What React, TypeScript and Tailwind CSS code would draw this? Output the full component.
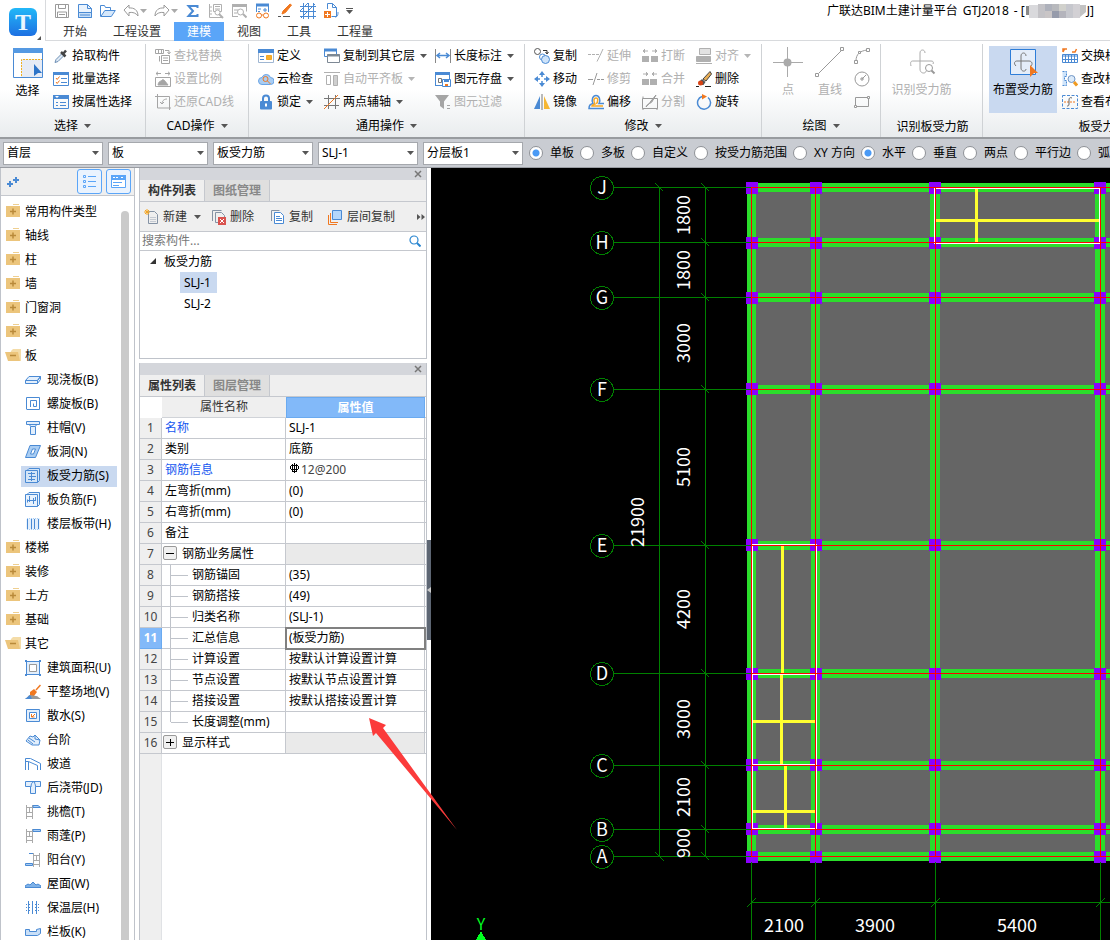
import { useState } from 'react';
import type { ReactNode } from 'react';

const BLUE = '#4a8ad4';
const GREY = '#b0b0b0';
const ORANGE = '#f07820';

const icons: Record<string, ReactNode> = {
  // quick access
  save: <g stroke="#9a9a9a"><path d="M1.500 1.500h13v13h-13zM4.500 1.500v4h7v-4M3.500 14v-5h9v5M5 11.500h6" /></g>,
  newDoc: <g stroke={BLUE}><path d="M1.500 1.500h9l4 4v9h-13z" fill="#eaf3fd" /><path d="M10.500 1.500v4h4" /><path d="M1.500 9.500h13v5h-13z" fill="#c9dff7" /><path d="M3 12h10" /></g>,
  open: <g stroke={BLUE}><path d="M.5 13.500v-11h4l1 2h5v3" /><path d="M.8 13.500l4-6h10.500l-4 6z" fill="#d6e8fb" /></g>,
  undo: <path d="M1 7l5-5v3c5-.5 9 2 9 8-2-3-5-4-9-3.500V13z" stroke="#9a9a9a" />,
  redo: <path d="M15 7l-5-5v3c-5-.5-9 2-9 8 2-3 5-4 9-3.500V13z" stroke="#9a9a9a" />,
  sigma: <path d="M12.500 5V3h-9L8 8l-4.500 5h9v-2" stroke={BLUE} strokeWidth="2" />,
  measure: <g stroke={GREY}><path d="M1.500 1v13.500h13M2 4h2M2 8h2M2 11h2M5.500 1.500h8v7h-8zM7 3.500h5M7 6h5" /><circle cx="9.500" cy="9.500" r="2.500" fill="#fff" /><path d="M11 11l4 4" strokeWidth="2" /></g>,
  find: <g stroke={GREY}><path d="M1.500 13V2.500h14v6M3 7h4M3 10h3M1 13.500h6" /><path d="M1 2.500h15" strokeWidth="3" /><circle cx="9.500" cy="9" r="3" /><path d="M12 11l3.500 3.500" strokeWidth="2" /></g>,
  glasses: <g><path d="M2.500 9V2.500h12V9" stroke={BLUE} /><path d="M2 2h13" stroke={BLUE} strokeWidth="3" /><path d="M4 6h3M4 8.500h2M9 7h4M11 5v4" stroke={BLUE} /><circle cx="5" cy="12.500" r="2.500" stroke={ORANGE} /><circle cx="12" cy="12.500" r="2.500" stroke={ORANGE} /><path d="M7 12h2.500" stroke={ORANGE} /></g>,
  brush: <g><path d="M13 1l1.500 1L8.500 9.500 5 11l1-3z" stroke={ORANGE} fill={ORANGE} /><path d="M1 13.500h3M6 13.500h7" stroke="#555" /></g>,
  grid: <path d="M3.500 0v16M8.500 0v16M13.500 0v16M0 3.500h16M0 8.500h16M0 13.500h16M1 15L15 1M0 8l8-8" stroke={BLUE} />,
  addDoc: <g><path d="M4.500 6V.5h5l4 4v9h-5" stroke={BLUE} /><path d="M9.500 .5v4h4M12 14c3 0 3-3 3-5" stroke={BLUE} /><path d="M1 8h7v7H1z" fill={ORANGE} /><path d="M4.500 9v5M2 11.500h5" stroke="#fff" /></g>,
  // ribbon
  pipette: <g><path d="M2 14.500l1-3L9 5.500l2 2-6 6z" stroke="#6d8fb5" fill="#dfeaf5" /><path d="M8 4l4.500 4.500M10 6l3-3.500" stroke="#444" strokeWidth="2.500" /></g>,
  checklist: <g><path d="M.5 2.500h15v12H.5z" stroke={BLUE} /><path d="M0 2.500h16" stroke={BLUE} strokeWidth="3" /><path d="M3 7l1.200 1.500L6.500 5.500M3 11l1.200 1.500 2.300-3" stroke={ORANGE} /><path d="M8 7.500h6M8 11.500h6" stroke={BLUE} /></g>,
  attrList: <g><path d="M.5 2.500h15v12H.5z" stroke={BLUE} /><path d="M0 3h16" stroke={BLUE} strokeWidth="4" /><path d="M2 2l2 2 2-2z" fill="#fff" /><path d="M3 8.500h2M3 11.500h2M7 8.500h6M7 11.500h6" stroke={BLUE} /></g>,
  replace: <g stroke="#a5a5a5"><path d="M.5 1.500h8v4h-8zM3.500 1.500v4M6.500 1.500v4M10 2.500h4v3M12.500 4l1.500 2 1.500-2M4.500 8v5.500M6.500 7.500h8v8h-8zM8 10h5M8 12.500h5" /></g>,
  scale: <g stroke="#a5a5a5"><path d="M1 2.500h5M10 2.500h5M3 .8L1 2.500l2 1.800M13 .8l2 1.700-2 1.800M.5 6.500h15v9H.5z" /><path d="M3 14c1-5 3-3 4-5 2-1 3 1 6 5z" fill="#a5a5a5" /></g>,
  restore: <g stroke="#a5a5a5"><path d="M2.500 0v14H16M0 2.500h14.500V16M5 8l2 2 2-2M7 10c0-4 3-5 5-5" /></g>,
  define: <g><path d="M.5 1.500h15v13H.5z" stroke="#9fb6d2" fill="#fff" /><path d="M0 3h16" stroke={BLUE} strokeWidth="4" /><path d="M2 8.500h4M2 11.500h4" stroke={BLUE} /><path d="M8.500 7.500h5v4h-5z" fill="#f5b030" stroke="#f5a623" /></g>,
  cloud: <g><path d="M4 13.500a3.500 3.500 0 010-7 4.500 4.500 0 018.500 0 3.500 3.500 0 010 7z" fill="#a9cdf3" stroke="#6ba4e4" /><circle cx="7.500" cy="8" r="2.500" stroke={ORANGE} /><path d="M9.500 10l3 3" stroke={ORANGE} /></g>,
  lock: <g><path d="M5 8V4.500a3 3 0 016 0V8" stroke={BLUE} strokeWidth="2" /><rect x="2" y="7" width="12" height="8.500" rx="1" fill={BLUE} /><path d="M8 9.500v3" stroke="#fff" strokeWidth="2" /></g>,
  copyLayer: <g><path d="M.5 1.500h12v7H.5z" stroke={BLUE} /><path d="M0 2h13" stroke={BLUE} strokeWidth="3" /><path d="M3.500 6.500h12v8h-12z" fill="#fff" stroke="#7d8894" /><path d="M3 7.500h13" stroke="#7d8894" strokeWidth="2" /></g>,
  align: <g stroke={GREY}><path d="M0 1.500h16M2.500 4.500h4v9h-4z" /><path d="M9.500 4.500h4v10h-4z" fill="#cfcfcf" /></g>,
  axis: <g><path d="M4.500 1v14M11.500 1v14M0 4.500h16M0 11.500h15" stroke="#777" /><path d="M0 15L14 1" stroke={ORANGE} /></g>,
  dimension: <g><path d="M.5 1v14M15.500 1v14" stroke="#888" /><path d="M2 7.500h12M5 5L2 7.500 5 10M11 5l3 2.500-3 2.500" stroke={BLUE} strokeWidth="1.500" /></g>,
  store: <g><path d="M.5 14.500v-13h14V8M0 14.500h7" stroke={BLUE} /><path d="M0 2.500h15" stroke={BLUE} strokeWidth="3" /><path d="M3.500 7.500h3v4h-3z" stroke="#777" /><path d="M7.500 8.500h8v7h-8z" fill="#fff" stroke={BLUE} /><path d="M9 8h5v3H9z" fill={BLUE} /><path d="M10 13h3v2h-3z" fill={ORANGE} /></g>,
  filter: <g><path d="M0 1h14L9 7.500V15l-4-3V7.500z" fill="#a5a5a5" /><path d="M12 11.500h3M12 14.500h3" stroke="#a5a5a5" /></g>,
  copy: <g><circle cx="3.500" cy="3.500" r="3" stroke="#555" /><path d="M9 2.500h4v3M11.500 4l1.500 2 1.500-2" stroke="#333" /><circle cx="8.500" cy="9" r="3" stroke={BLUE} /><circle cx="11.500" cy="11.500" r="4" stroke={BLUE} fill="#cfe4fa" /></g>,
  move: <g fill={BLUE}><path d="M8 0l3 4H5zM8 16l3-4H5zM0 8l4-3v6zM16 8l-4-3v6z" /><path d="M8 3v3M8 10v3M3 8h3M10 8h3" stroke={BLUE} strokeWidth="1.500" /></g>,
  mirror: <g><path d="M6 2v13H0z" fill={BLUE} /><path d="M10 2v13h6z" fill="#f7b733" /><path d="M8 0v16" stroke="#777" /></g>,
  extend: <path d="M0 6.500h3M4 6.500h3M8 6.500h3M15 1l-3 6.500-3 6" stroke={GREY} />,
  trim: <path d="M0 8.500h5M9 8.500h3M13 8.500h3M9 2L5 14" stroke="#999" />,
  offset: <g strokeWidth="1.500"><path d="M16 14.500H1c0-3 1-4.500 4-5-2-4 0-8 3-8s5 4 3 8h5" stroke={BLUE} /><path d="M15 12H4c0-1 1-1.500 3-2-2-4-1-6 1-6s2.500 2 .5 6" stroke="#f7a823" /></g>,
  breakIt: <g fill={GREY}><path d="M0 8h7v6H0zM9 8h7v6H9z" /><path d="M1 3h5M3 1L1 3l2 2M10 3h5M13 1l2 2-2 2" stroke={GREY} /></g>,
  merge: <g fill={GREY}><path d="M0 8h7v6H0zM8 8h7v6H8z" /><path d="M1 3h5M4 1l2 2-2 2M10 3h5M12 1l-2 2 2 2" stroke={GREY} /></g>,
  split: <g stroke="#999"><path d="M.5 4.500h15v10H.5zM1 4.500v-2M1 16v-2M15 16v-2" /><path d="M4 13c1-4 6-3 7-7l3-5-5 6c-2 3-3 4-5 6z" fill="#bbb" /></g>,
  alignBox: <g><path d="M3.500 .5h11v6h-11z" stroke={GREY} fill="#e2e2e2" /><path d="M.5 8.500h14v5H.5z" fill={GREY} stroke={GREY} /><path d="M0 15.500h16" stroke={GREY} /></g>,
  erase: <g><path d="M7 8l7-7.500L15.500 3 10 10z" fill="#e8ad55" stroke="#444" /><path d="M6 8l3.500 3-2 3H3V11z" fill="#555" /><circle cx="4.500" cy="12" r="2.500" fill="#d84315" /><path d="M0 15.500h3M9 15.500h6" stroke="#222" /></g>,
  rotate: <g><path d="M12 3.500a6.500 6.500 0 11-6-1" stroke={BLUE} strokeWidth="1.500" /><path d="M6 0l5 2.500L6 5.500z" fill={ORANGE} /></g>,
  swap: <g><path d="M1 4l1.500-3M1 4V1h4M14.500 1L13 4h-3" stroke={ORANGE} strokeWidth="1.500" /><path d="M.5 6.500h15v8H.5zM0 8h16M3.500 7v8M6.500 7v8M9.500 7v8M12.500 7v8M0 11.500h16" stroke={BLUE} /></g>,
  modify: <g><path d="M.5 .5h4v5h-2v4h2v5h-4" stroke={BLUE} strokeDasharray="2 1" fill="#cfe4fa" /><circle cx="9.500" cy="8" r="3.500" stroke="#6f94c4" fill="#dcebfa" /><path d="M12 11l3 3.500" stroke="#f09a20" strokeWidth="3" /></g>,
  view: <g><path d="M.5 1.500h15v13H.5z" stroke={BLUE} strokeDasharray="3 1.500" /><path d="M2 8h12" stroke={ORANGE} strokeDasharray="2 1" /><path d="M10 4c-2-1-3 0-3 2v4c0 2-1 2-2 2" stroke="#666" /></g>,
  arc: <g stroke="#999"><path d="M2 13C2 6 6 3 13 2" /><path d="M.5 12.500h3v3h-3zM4.500 3.500h2v2h-2zM12.500 .5h3v3h-3z" fill="#fff" /></g>,
  circle: <g stroke="#999"><circle cx="8" cy="8" r="7" /><path d="M8 8l4-4M7 7h2v2H7z" /></g>,
  rect: <g stroke="#999"><path d="M1.500 3.500h13v9h-13z" /><path d="M.5 11.500h2v2h-2zM13.500 2.500h2v2h-2z" fill="#fff" /></g>,
  // component toolbar
  newItem: <g><path d="M4.500 2.500h6l3 3v9h-9z" stroke="#8593a5" /><path d="M6 8.500h6M6 10.500h6M6 12.500h6" stroke="#c5cad2" /><path d="M0 3h6M3 0v6M1 1l4 4M5 1L1 5" stroke="#f5a623" /></g>,
  delItem: <g><path d="M1.500 12V1.500h9M4.500 13.500v-10h6l3 3V8M4.500 13.500H7" stroke="#8593a5" /><path d="M7 8h8v8H7z" fill="#d9534f" /><path d="M9 10l4 4M13 10l-4 4" stroke="#fff" /></g>,
  copyItem: <g><path d="M1.500 12V1.500h8" stroke="#8593a5" /><path d="M4.500 3.500h6l3 3v8h-9z" stroke={BLUE} fill="#fff" /><path d="M6 7.500h4M6 9.500h6M6 11.500h6" stroke={BLUE} /></g>,
  layerItem: <g><path d="M1.500 6v9.500H10M3.500 4v9.500H11" stroke={ORANGE} /><path d="M5.500 1.500h9v9h-9z" fill="#b3d6fb" stroke={BLUE} /></g>,
  // navigation tree
  folder: <g><path d="M8 0h6v1H8z" fill="#efcf90" /><path d="M1 2h14v11H1z" fill="#ecc57c" /><path d="M5 7.500h6M8 4.500v6" stroke="#b98a3a" strokeWidth="1.500" /></g>,
  folderOpen: <g><path d="M6 3l2-2h8v12H3z" fill="#f4dca8" /><path d="M0 4h13l2 9H3z" fill="#ecc57c" /><path d="M5 7.500h6" stroke="#b98a3a" strokeWidth="1.500" /></g>,
  slab: <path d="M4 4.500h11.500l-3 4v3H.5v-3zM.5 8.500h12l3-4v3l-3 4" stroke={BLUE} fill="#e3effc" />,
  spiral: <path d="M2 13.500h12.500v-12h-13v12M5.500 11V4.500h6v6h-3v-3" stroke={BLUE} />,
  cap: <path d="M1.500 1.500h13v3h-3l-1 2v8h-5v-8l-1-2h-3zM4 4.500h8M6 6.500h4" stroke={BLUE} fill="#e3effc" />,
  hole: <g stroke={BLUE}><path d="M5 1.500h10.500l-5 12H.5z" fill="#a9cdf3" /><path d="M7.500 5h3l-2 5h-3z" fill="#fff" /></g>,
  rebar: <g stroke={BLUE}><path d="M.5 2.500h12v12H.5zM2 2.500l2-2h10.500v12l-2 2" fill="#d3e5f8" /><path d="M3 5.500h7M3 11.500h7M6.500 4v9M4 8.500h7" /></g>,
  negRebar: <g stroke={BLUE}><path d="M.5 2.500h12v12H.5zM2 2.500l2-2h10.500v12l-2 2" fill="#e8f2fd" /><path d="M4.500 4v6M8.500 6v6M3 8.500h7M2.500 7.500v3M10.500 5v4" /></g>,
  band: <g stroke={BLUE}><path d="M2 2.500h12v11H2z" fill="#e3effc" stroke="#a9cdf3" strokeDasharray="1 1" /><path d="M2.500 3v10M6.500 3v10M9.500 3v10M13.500 3v10" /></g>,
  area: <g><path d="M1.500 1.500h13v13h-13z" stroke={BLUE} fill="#e3effc" /><path d="M4.500 4.500h7v7h-7z" stroke="#999" fill="#fff" /><path d="M0 0h2v2H0zM14 0h2v2h-2zM0 14h2v2H0zM14 14h2v2h-2z" fill={BLUE} /></g>,
  ground: <g><path d="M15.500 1L11 6" stroke={ORANGE} strokeWidth="1.500" /><path d="M5 8l4-3 3 3-3 4H5z" fill={ORANGE} /><path d="M0 15c3-1 3-4 5-4s4 1 6 1 3 2 5 3z" fill="#999" /><path d="M0 15h7l-2-4z" fill={BLUE} /></g>,
  apron: <g><path d="M1.500 1.500h13v12h-13z" stroke={BLUE} fill="#e3effc" /><path d="M4.500 4.500h7v6h-7z" stroke={BLUE} fill="#fff" /><path d="M10 6l-3 3M6.500 6v3h3" stroke={ORANGE} /></g>,
  steps: <g stroke={BLUE}><path d="M1 9l4-5 3 1 2-2 5 5-1 5H7z" fill="#e3effc" /><path d="M4 6l6 4M3 8l5 4M10 3v4l5 1" /></g>,
  ramp: <path d="M.5 14V2.500h5l10 5V14M3.500 14V5.500l9 4V14M.5 5.500h3" stroke={BLUE} />,
  pour: <g stroke={BLUE}><path d="M.5 1.500h15v5h-5v7h-5v-7h-5z" fill="#e3effc" /><path d="M6 7c0-3 1-5 3-5.500M10.500 6.500c0-3-1-2-1-5" /></g>,
  eave: <g><path d="M1.500 1v14M7.500 1v14M4.500 3v5M1 3.500h6M1 8.500h6M1 12.500h6" stroke="#aaa" /><path d="M8 1.500h5l2.500 2H8z" fill="#a9cdf3" stroke={BLUE} /></g>,
  canopy: <g><path d="M1.500 1v14M7.500 1v14M4.500 3v5M1 3.500h6M1 8.500h6M1 12.500h6" stroke="#aaa" /><path d="M8 1.500h7.500v2H8z" fill="#a9cdf3" stroke={BLUE} /></g>,
  balcony: <g><path d="M8.500 1v14M14.500 1v14M11.500 3v5M8 3.500h6M8 8.500h6M8 12.500h6" stroke="#aaa" /><path d="M.5 11.500h7v2h-7zM4 1.500h4" fill="#a9cdf3" stroke={BLUE} /></g>,
  roof: <path d="M0 10l3-2 2 1 3-3 3 3 2-1 3 2v1.500H0z" fill="#7fb2e8" stroke={BLUE} />,
  insulate: <g stroke={BLUE}><path d="M3.500 1v13M7.500 1v13M11.500 1v13" /><path d="M1 4.500h14M1 7.500h14M1 10.500h14" strokeDasharray="1 2" /></g>,
  rail: <path d="M.5 5.500h4v2h7v-2l4-1v5l-3 2h-12z" stroke={BLUE} fill="#c9dff7" />,
};

function Icon({ name }: { name: string }) {
  return (
    <svg viewBox="0 0 16 16" fill="none" aria-hidden="true" className="size-4 shrink-0">
      {icons[name]}
    </svg>
  );
}

function Caret({ className = 'text-[#555]' }: { className?: string }) {
  return (
    <svg viewBox="0 0 7 4" aria-hidden="true" className={`h-1 w-[7px] shrink-0 ${className}`}>
      <path d="M0 0h7L3.500 4z" fill="currentColor" />
    </svg>
  );
}

type Tool = { icon: string; label: string; off?: boolean; menu?: boolean };

function ToolColumn({ tools, className = '' }: { tools: Tool[]; className?: string }) {
  return (
    <div className={`flex shrink-0 flex-col ${className}`}>
      {tools.map((t) => (
        <button
          key={t.label}
          disabled={t.off}
          className="flex h-[23px] items-center gap-[3px] whitespace-nowrap text-black disabled:text-[#b0b0b0]"
        >
          <Icon name={t.icon} />
          {t.label}
          {t.menu && <span className="ml-[2px] flex"><Caret className={t.off ? 'text-[#b5b5b5]' : 'text-[#555]'} /></span>}
        </button>
      ))}
    </div>
  );
}

function Group({ label, menu, className, children }: { label: string; menu?: boolean; className: string; children: ReactNode }) {
  return (
    <section className={`flex shrink-0 flex-col justify-between border-r border-[#cfd2d5] ${className}`}>
      <div className="flex">{children}</div>
      <div className={`flex items-center justify-center gap-[6px] whitespace-nowrap text-black ${menu ? 'h-[22px]' : 'h-5'}`}>
        {label}
        {menu && <Caret />}
      </div>
    </section>
  );
}

const quickTools: [string, string][] = [
  ['save', '保存'], ['newDoc', '新建'], ['open', '打开'], ['undo', '撤销'], ['redo', '恢复'], ['sigma', '汇总计算'], ['measure', '查看工程量'],
  ['find', '查找'], ['glasses', '查看'], ['brush', '格式刷'], ['grid', '轴网'], ['addDoc', '导入'],
];

const tabs = ['开始', '工程设置', '建模', '视图', '工具', '工程量'];

function Header() {
  return (
    <header className="flex bg-white">
      <div className="flex w-[46px] shrink-0 items-start border-r border-[#d8dadd] pt-2 pl-[9px]">
        <svg viewBox="0 0 32 32" className="h-8 w-8" aria-label="GTJ2018">
          <defs>
            <linearGradient id="logo" x1="0" y1="0" x2="0" y2="1">
              <stop offset="0" stopColor="#22b8f8" />
              <stop offset="1" stopColor="#1d70e2" />
            </linearGradient>
          </defs>
          <rect x="0" y="0" width="28" height="28" rx="6" fill="url(#logo)" />
          <text x="14" y="22" textAnchor="middle" fontSize="24" fontWeight="bold" fontFamily="Liberation Serif, serif" fill="#e9f6ff">T</text>
          <path d="M32 28v4h-4z" fill="#555" />
        </svg>
      </div>
      <div className="min-w-0 flex-1">
        <div className="flex h-[22px] items-center">
          <div className="flex items-center gap-[7px] pl-2">
            {quickTools.map(([icon, label]) => (
              <div key={icon} className={icon === 'undo' || icon === 'redo' ? 'flex w-6 items-center gap-px' : 'flex items-center'}>
                <button aria-label={label}><Icon name={icon} /></button>
                {(icon === 'undo' || icon === 'redo') && <Caret className="text-[#aaa]" />}
              </div>
            ))}
            <button aria-label="自定义快速访问工具栏" className="flex flex-col items-center gap-px">
              <span className="h-px w-[7px] bg-[#555]" />
              <Caret />
            </button>
          </div>
          <div className="mr-4 ml-auto flex items-center whitespace-nowrap text-black">
            <span className="mr-[5px]">广联达BIM土建计量平台</span>
            <span className="mr-[5px]">GTJ2018</span>
            <span>- [</span>
            <svg viewBox="0 0 62 14" className="h-[14px] w-[62px]" aria-hidden="true">
              <path d="M1 2h3v9H1z" fill="#888" />
              <path d="M4 1h9v13H4z" fill="#d9d9dc" />
              <path d="M13 0h7v14h-7z" fill="#c3c2c6" />
              <path d="M20 0h7v7h-7z" fill="#aeb1bb" />
              <path d="M20 7h7v7h-7z" fill="#c9c5c6" />
              <path d="M27 0h7v7h-7z" fill="#b8b9bd" />
              <path d="M27 7h7v7h-7z" fill="#969bab" />
              <path d="M34 0h7v7h-7z" fill="#d1d1cc" />
              <path d="M34 7h7v7h-7z" fill="#b4b4bc" />
              <path d="M41 0h7v14h-7z" fill="#c6c7cd" />
              <path d="M48 0h7v14h-7z" fill="#d2d0d4" />
              <path d="M55 1h6v7l-6 5z" fill="#c3c3c3" />
            </svg>
            <span>J]</span>
          </div>
        </div>
        <nav className="flex h-[19px] border-b border-[#d8dadd] pl-1">
          {tabs.map((t) => (
            <button
              key={t}
              className={t === '建模' ? 'h-[19px] bg-[#5aa5f8] px-[13px] text-white' : 'h-[19px] px-[13px] text-[#333]'}
            >
              {t}
            </button>
          ))}
        </nav>
      </div>
    </header>
  );
}

function Ribbon() {
  return (
    <div className="flex h-[98px] overflow-hidden border-b-2 border-[#989b9f] bg-gradient-to-b from-white via-white to-[#e9ecee] pt-[3px]">
      <Group label="选择" menu className="w-[146px]">
        <button className="flex w-[55px] flex-col items-center gap-1 pt-1 text-black">
          <svg viewBox="0 0 30 30" className="size-[30px]" fill="none" aria-hidden="true">
            <path d="M.5 .5h29v29H.5z" fill="#fff" stroke={BLUE} />
            <path d="M0 0h30v5H0z" fill="#5599e2" />
            <path d="M8 11h21v18H8z" fill="#e6ebf5" />
            <path d="M8.500 28V11.500H29" stroke="#f0b020" strokeDasharray="2 1" />
            <path d="M21 16v12l4-3h4z" fill="#2d74c8" />
          </svg>
          选择
        </button>
        <ToolColumn
          className="-ml-[2px]"
          tools={[
            { icon: 'pipette', label: '拾取构件' },
            { icon: 'checklist', label: '批量选择' },
            { icon: 'attrList', label: '按属性选择' },
          ]}
        />
      </Group>
      <Group label="CAD操作" menu className="w-[103px]">
        <ToolColumn
          className="pl-[9px]"
          tools={[
            { icon: 'replace', label: '查找替换', off: true },
            { icon: 'scale', label: '设置比例', off: true },
            { icon: 'restore', label: '还原CAD线', off: true },
          ]}
        />
      </Group>
      <Group label="通用操作" menu className="w-[276px]">
        <ToolColumn
          className="w-[75px] pl-[9px]"
          tools={[
            { icon: 'define', label: '定义' },
            { icon: 'cloud', label: '云检查' },
            { icon: 'lock', label: '锁定', menu: true },
          ]}
        />
        <ToolColumn
          className="w-[111px]"
          tools={[
            { icon: 'copyLayer', label: '复制到其它层', menu: true },
            { icon: 'align', label: '自动平齐板', off: true, menu: true },
            { icon: 'axis', label: '两点辅轴', menu: true },
          ]}
        />
        <ToolColumn
          tools={[
            { icon: 'dimension', label: '长度标注', menu: true },
            { icon: 'store', label: '图元存盘', menu: true },
            { icon: 'filter', label: '图元过滤', off: true },
          ]}
        />
      </Group>
      <Group label="修改" menu className="w-[237px]">
        <ToolColumn
          className="w-[63px] pl-[9px]"
          tools={[
            { icon: 'copy', label: '复制' },
            { icon: 'move', label: '移动' },
            { icon: 'mirror', label: '镜像' },
          ]}
        />
        <ToolColumn
          className="w-[54px]"
          tools={[
            { icon: 'extend', label: '延伸', off: true },
            { icon: 'trim', label: '修剪', off: true },
            { icon: 'offset', label: '偏移' },
          ]}
        />
        <ToolColumn
          className="w-[54px]"
          tools={[
            { icon: 'breakIt', label: '打断', off: true },
            { icon: 'merge', label: '合并', off: true },
            { icon: 'split', label: '分割', off: true },
          ]}
        />
        <ToolColumn
          tools={[
            { icon: 'alignBox', label: '对齐', off: true, menu: true },
            { icon: 'erase', label: '删除' },
            { icon: 'rotate', label: '旋转' },
          ]}
        />
      </Group>
      <Group label="绘图" menu className="w-[119px]">
        <button disabled className="flex w-[52px] flex-col items-center gap-1 pt-[3px] text-[#b0b0b0]">
          <svg viewBox="0 0 30 30" className="size-[30px]" aria-hidden="true">
            <path d="M14.500 0v30M0 15.500h30" stroke="#aaa" />
            <circle cx="14.500" cy="15.500" r="4" fill="#aaa" />
          </svg>
          点
        </button>
        <button disabled className="flex w-8 flex-col items-center gap-1 pt-[3px] text-[#b0b0b0]">
          <svg viewBox="0 0 30 30" className="size-[30px]" fill="none" stroke="#999" aria-hidden="true">
            <path d="M4 26L26 4M.5 26.500h3v3h-3zM25.500 .5h3v3h-3z" />
          </svg>
          直线
        </button>
        <div className="flex flex-col pl-2">
          {[['arc', '圆弧'], ['circle', '圆'], ['rect', '矩形']].map(([icon, label]) => (
            <button key={icon} aria-label={label} className="flex h-[23px] items-center"><Icon name={icon} /></button>
          ))}
        </div>
      </Group>
      <Group label="识别板受力筋" className="w-[102px] pl-[2px]">
        <button disabled className="flex w-[77px] flex-col items-center gap-1 pt-[3px] text-[#b0b0b0]">
          <svg viewBox="0 0 30 30" className="size-[30px]" fill="none" stroke="#aaa" aria-hidden="true">
            <path d="M18 6c0-4-5-4-5 0v16c0 5 6 5 6 2M4 19c-1-4 0-5 2-5h18c2 0 3 1 2 3" />
            <circle cx="22" cy="21" r="3.500" fill="#fff" stroke="#999" />
            <path d="M24.500 23.500l3 3" stroke="#999" strokeWidth="2" />
          </svg>
          识别受力筋
        </button>
      </Group>
      <Group label="板受力筋二次编辑" className="w-[288px]">
        <button className="mt-[2px] ml-[6px] flex h-[67px] w-[68px] shrink-0 flex-col items-center gap-1 bg-[#c9d9f0] pt-[3px] text-black">
          <svg viewBox="0 0 30 28" className="h-[28px] w-[30px]" fill="none" aria-hidden="true">
            <path d="M2.500 .5h25v25h-25z" fill="#e4edf9" stroke="#2d7dd8" />
            <path d="M18 7c0-4-5-4-5 0v12c0 4 5 4 5 1M8 17c-3-3-1-5 1-5h12c3 0 4 3 2 5" stroke="#777" />
            <path d="M22 16l8 8h-4l-4 4z" fill={ORANGE} />
          </svg>
          布置受力筋
        </button>
        <ToolColumn
          className="pl-[5px]"
          tools={[
            { icon: 'swap', label: '交换标注' },
            { icon: 'modify', label: '查改标注' },
            { icon: 'view', label: '查看布筋' },
          ]}
        />
      </Group>
    </div>
  );
}

const filters: [string, string[]][] = [
  ['楼层', ['首层', '基础层', '第2层']],
  ['构件分类', ['板', '梁', '墙']],
  ['构件类型', ['板受力筋', '板负筋']],
  ['构件', ['SLJ-1', 'SLJ-2']],
  ['分层', ['分层板1', '分层板2']],
];

const ranges = ['单板', '多板', '自定义', '按受力筋范围'];
const directions = ['XY 方向', '水平', '垂直', '两点', '平行边', '弧线边布置放射筋'];

function Radios({ name, options, initial }: { name: string; options: string[]; initial: string }) {
  const [value, setValue] = useState(initial);
  return (
    <>
      {options.map((o) => (
        <label key={o} className="flex shrink-0 items-center gap-[7px] whitespace-nowrap">
          <input
            type="radio"
            name={name}
            checked={value === o}
            onChange={() => setValue(o)}
            className="size-[14px] appearance-none rounded-full border border-[#8e9196] bg-white checked:bg-[radial-gradient(circle,#4a9af5_0_3px,#fff_4px)]"
          />
          {o}
        </label>
      ))}
    </>
  );
}

function OptionBar() {
  return (
    <div className="flex h-[29px] items-center gap-[6px] overflow-hidden border-b border-[#999ca2] bg-[#c9ccd2] pl-[3px] text-black">
      <div className="flex shrink-0 gap-[5px]">
        {filters.map(([label, options]) => (
          <div key={label} className="relative flex">
            <select aria-label={label} className="h-[23px] w-[100px] appearance-none border border-[#a5a8ad] bg-white pl-[3px] text-black">
              {options.map((o) => <option key={o}>{o}</option>)}
            </select>
            <span className="pointer-events-none absolute inset-y-0 right-1 flex items-center"><Caret /></span>
          </div>
        ))}
      </div>
      <Radios name="range" options={ranges} initial="单板" />
      <Radios name="direction" options={directions} initial="水平" />
    </div>
  );
}

type Node = { label: string; icon?: string };

const navItems: Node[] = [
  { label: '常用构件类型' }, { label: '轴线' }, { label: '柱' }, { label: '墙' }, { label: '门窗洞' }, { label: '梁' }, { label: '板' },
  { label: '现浇板(B)', icon: 'slab' },
  { label: '螺旋板(B)', icon: 'spiral' },
  { label: '柱帽(V)', icon: 'cap' },
  { label: '板洞(N)', icon: 'hole' },
  { label: '板受力筋(S)', icon: 'rebar' },
  { label: '板负筋(F)', icon: 'negRebar' },
  { label: '楼层板带(H)', icon: 'band' },
  { label: '楼梯' }, { label: '装修' }, { label: '土方' }, { label: '基础' }, { label: '其它' },
  { label: '建筑面积(U)', icon: 'area' },
  { label: '平整场地(V)', icon: 'ground' },
  { label: '散水(S)', icon: 'apron' },
  { label: '台阶', icon: 'steps' },
  { label: '坡道', icon: 'ramp' },
  { label: '后浇带(JD)', icon: 'pour' },
  { label: '挑檐(T)', icon: 'eave' },
  { label: '雨蓬(P)', icon: 'canopy' },
  { label: '阳台(Y)', icon: 'balcony' },
  { label: '屋面(W)', icon: 'roof' },
  { label: '保温层(H)', icon: 'insulate' },
  { label: '栏板(K)', icon: 'rail' },
];

function Navigator() {
  return (
    <aside className="flex w-[135px] shrink-0 flex-col border-x border-[#bfc3ca] bg-white">
      <div className="flex h-7 items-center gap-1 border-b border-[#c5c8ce] bg-[#efefef] pr-[3px] pl-[5px]">
        <button aria-label="展开全部" className="mr-auto">
          <svg viewBox="0 0 14 12" className="h-3 w-[14px]" aria-hidden="true">
            <path d="M1 8h6M4 5v6M7 4h6M10 1v6" stroke={BLUE} strokeWidth="2" />
          </svg>
        </button>
        <button aria-label="列表" className="flex size-[25px] items-center justify-center rounded-[3px] border border-[#5aa5f8] bg-[#eaf3fe]">
          <svg viewBox="0 0 13 13" className="size-[13px]" fill="none" stroke="#5aa5f8" aria-hidden="true">
            <path d="M.5 .5h2v2h-2zM.5 5.500h2v2h-2zM.5 10.500h2v2h-2zM5 1.500h8M5 6.500h8M5 11.500h8" />
          </svg>
        </button>
        <button aria-label="窗口" className="flex size-[25px] items-center justify-center rounded-[3px] border border-[#5aa5f8] bg-[#eaf3fe]">
          <svg viewBox="0 0 15 13" className="h-[13px] w-[15px]" fill="none" aria-hidden="true">
            <path d="M.5 .5h14v12H.5z" fill="#fff" stroke="#5aa5f8" />
            <path d="M0 0h15v5H0z" fill="#5aa5f8" />
            <path d="M2 2.500h5M10 2.500h3" stroke="#fff" strokeDasharray="2 1" />
            <path d="M2 7.500h9M2 10.500h6" stroke="#5aa5f8" />
          </svg>
        </button>
      </div>
      <div className="flex min-h-0 flex-1 overflow-hidden">
        <ul className="min-w-0 flex-1 pt-1 text-black">
          {navItems.map((n) => (
            <li key={n.label} className={n.icon ? 'flex h-6 items-center pl-5' : 'flex h-6 items-center pl-1'}>
              <button
                className={
                  n.label === '板受力筋(S)'
                    ? 'flex h-[21px] w-24 items-center gap-[6px] bg-[#c9d9f0] pl-1 whitespace-nowrap'
                    : n.icon
                      ? 'flex items-center gap-[6px] pl-1 whitespace-nowrap'
                      : 'flex items-center gap-1 whitespace-nowrap'
                }
              >
                <Icon name={n.icon ?? (n.label === '板' || n.label === '其它' ? 'folderOpen' : 'folder')} />
                {n.label}
              </button>
            </li>
          ))}
        </ul>
        <div className="mt-[15px] mr-[5px] w-2 rounded-t-full bg-[#cacaca]" />
      </div>
    </aside>
  );
}

function PanelHead({ tabs: [active, other] }: { tabs: [string, string] }) {
  return (
    <>
      <div className="flex h-3 items-center justify-end bg-[#d4d6db] pr-1">
        <button aria-label="关闭">
          <svg viewBox="0 0 8 8" className="size-2" aria-hidden="true"><path d="M1 1l6 6M7 1L1 7" stroke="#777" strokeWidth="1.500" /></svg>
        </button>
      </div>
      <div className="flex h-[22px] border-b border-[#c5c8ce] bg-[#efefef] font-bold">
        <button className="w-[65px] border-r border-[#c5c8ce] text-[#333]">{active}</button>
        <button className="w-[65px] border-r border-[#c5c8ce] bg-[#dfdfdf] text-[#888]">{other}</button>
      </div>
    </>
  );
}

function ComponentPanel() {
  return (
    <section className="border border-t-0 border-[#bfc3ca] bg-white">
      <PanelHead tabs={['构件列表', '图纸管理']} />
      <div className="flex h-[30px] items-center border-b border-[#c5c8ce] bg-[#efefef] pl-1 text-[#333]">
        <button className="mr-[10px] flex items-center gap-[3px]"><Icon name="newItem" />新建<span className="ml-1"><Caret /></span></button>
        <button className="mr-4 flex items-center gap-[3px]"><Icon name="delItem" />删除</button>
        <button className="mr-[14px] flex items-center gap-[3px]"><Icon name="copyItem" />复制</button>
        <button className="flex items-center gap-1"><Icon name="layerItem" />层间复制</button>
        <button aria-label="更多" className="mr-px ml-auto">
          <svg viewBox="0 0 8 6" className="h-[6px] w-2" aria-hidden="true"><path d="M0 0l3.500 3L0 6zM4.500 0L8 3 4.500 6z" fill="#555" /></svg>
        </button>
      </div>
      <label className="flex h-[19px] items-center border-b border-[#c5c8ce] pr-[5px]">
        <input aria-label="搜索构件" placeholder="搜索构件..." className="w-full min-w-0 flex-1 pl-[2px] outline-none placeholder:text-[#777]" />
        <svg viewBox="0 0 12 12" className="size-3" fill="none" stroke="#2a86d0" aria-hidden="true">
          <circle cx="5" cy="5" r="4" strokeWidth="1.200" /><path d="M8 8l3.500 3.500" strokeWidth="2" />
        </svg>
      </label>
      <ul className="h-[107px] pl-[9px] text-black">
        <li>
          <div className="flex h-[21px] items-center gap-2">
            <svg viewBox="0 0 7 7" className="size-[7px]" aria-hidden="true"><path d="M7 0v6H1z" fill="#333" /></svg>
            板受力筋
          </div>
          <ul className="pl-[31px]">
            <li className="flex h-[21px]"><button className="bg-[#c9d9f0] pr-[6px] pl-1">SLJ-1</button></li>
            <li className="flex h-[21px]"><button className="pr-[6px] pl-1">SLJ-2</button></li>
          </ul>
        </li>
      </ul>
    </section>
  );
}

type Prop = { name: string; value?: ReactNode; kind?: 'key' | 'open' | 'closed' | 'child' | 'last' };

const props: Prop[] = [
  { name: '名称', value: 'SLJ-1', kind: 'key' },
  { name: '类别', value: '底筋' },
  {
    name: '钢筋信息',
    kind: 'key',
    value: (
      <span className="flex items-center gap-px text-[#444]">
        <svg viewBox="0 0 11 11" className="mb-1 size-[11px]" fill="none" stroke="#000" aria-label="HRB400">
          <path d="M5.500 0v10M3.500 1v7M7.500 1v7M2 2.500h7M1.500 3v3M9.500 3v3M2 6.500h7M3 8.500h5" />
        </svg>
        12@200
      </span>
    ),
  },
  { name: '左弯折(mm)', value: '(0)' },
  { name: '右弯折(mm)', value: '(0)' },
  { name: '备注' },
  { name: '钢筋业务属性', kind: 'open' },
  { name: '钢筋锚固', value: '(35)', kind: 'child' },
  { name: '钢筋搭接', value: '(49)', kind: 'child' },
  { name: '归类名称', value: '(SLJ-1)', kind: 'child' },
  { name: '汇总信息', value: '(板受力筋)', kind: 'child' },
  { name: '计算设置', value: '按默认计算设置计算', kind: 'child' },
  { name: '节点设置', value: '按默认节点设置计算', kind: 'child' },
  { name: '搭接设置', value: '按默认搭接设置计算', kind: 'child' },
  { name: '长度调整(mm)', kind: 'last' },
  { name: '显示样式', kind: 'closed' },
];

function PropName({ name, kind }: Prop) {
  if (kind === 'open' || kind === 'closed') {
    return (
      <div className="flex h-5 items-center gap-[5px] pl-px">
        <button aria-label={kind === 'open' ? '折叠' : '展开'} className="mb-[2px] flex size-[14px] items-center justify-center rounded-[2px] border border-[#999] bg-[#f0f0f0]">
          <svg viewBox="0 0 8 8" className="size-2" stroke="#000" aria-hidden="true">
            <path d={kind === 'open' ? 'M0 4.500h8' : 'M0 4.500h8M4.500 1v7'} />
          </svg>
        </button>
        {name}
      </div>
    );
  }
  if (kind === 'child' || kind === 'last') {
    return (
      <div className="flex h-5 items-center pl-2">
        <span className={kind === 'last' ? 'h-[10px] w-px self-start bg-[#bfc3ca]' : 'w-px self-stretch bg-[#bfc3ca]'} />
        <span className="mr-1 h-px w-[17px] bg-[#bfc3ca]" />
        {name}
      </div>
    );
  }
  return <div className={kind === 'key' ? 'flex h-5 items-center pl-[3px] text-[#1558f0]' : 'flex h-5 items-center pl-[3px]'}>{name}</div>;
}

function PropertyPanel() {
  return (
    <section className="flex min-h-0 flex-1 flex-col border-x border-[#bfc3ca] bg-white">
      <PanelHead tabs={['属性列表', '图层管理']} />
      <table className="w-full table-fixed border-separate border-spacing-0 text-black">
        <thead>
          <tr className="h-[21px]">
            <th className="w-[22px]" aria-label="序号" />
            <th className="w-[124px] border-b border-[#d0d3d8] bg-[#efefef] p-0 font-normal text-[#333]">属性名称</th>
            <th className="border border-[#6aaaf0] bg-[#82b9f9] p-0 font-bold text-white">属性值</th>
            <th className="w-px border-b border-[#c5c8ce] p-0" aria-hidden="true" />
          </tr>
        </thead>
        <tbody>
          {props.map((p, i) => {
            const current = p.name === '汇总信息';
            const group = p.kind === 'open' || p.kind === 'closed';
            return (
              <tr key={p.name} className="h-[21px]">
                <th
                  className={
                    current
                      ? 'border-r border-b border-[#6aaaf0] bg-[#82b9f9] p-0 font-bold text-white'
                      : 'border-r border-b border-[#c5c8ce] bg-[#efefef] p-0 font-normal text-[#444]'
                  }
                >
                  {i + 1}
                </th>
                <td className="border-r border-b border-[#c5c8ce] p-0 whitespace-nowrap"><PropName {...p} /></td>
                <td
                  className={`border-r border-b border-[#c5c8ce] p-0 whitespace-nowrap ${group ? 'bg-[#eaeaea]' : ''} ${current ? 'outline-2 -outline-offset-1 outline-[#808080]' : ''}`}
                >
                  <div className="flex h-5 items-center pl-[3px]">{p.value}</div>
                </td>
                <td className="border-b border-[#c5c8ce] p-0" aria-hidden="true" />
              </tr>
            );
          })}
        </tbody>
      </table>
      <div className="w-[22px] flex-1 border-r border-[#e0e2e5] bg-[#efefef]" />
    </section>
  );
}

// Plan geometry, in canvas pixels. Beams run along every axis, columns sit on the crossings.
// `off` is how far a column reaches past its axis on the near side.
const axesX = [
  { x: 320, beam: 4, off: 5 }, { x: 384, beam: 4, off: 5 }, { x: 504, beam: 5, off: 6 }, { x: 669, beam: 5, off: 6 },
];
const axesY = [
  { name: 'J', y: 19, off: 5 }, { name: 'H', y: 74, off: 5 }, { name: 'G', y: 129, off: 5 }, { name: 'F', y: 221, off: 6 },
  { name: 'E', y: 377, off: 6 }, { name: 'D', y: 505, off: 5 }, { name: 'C', y: 597, off: 6 }, { name: 'B', y: 661, off: 6 },
  { name: 'A', y: 688, off: 5 },
];
const spansY = [
  { text: '1800', y: 47 }, { text: '1800', y: 102 }, { text: '3000', y: 175 }, { text: '5100', y: 299 },
  { text: '4200', y: 441 }, { text: '3000', y: 551 }, { text: '2100', y: 629 }, { text: '900', y: 675 },
];
const spansX = [{ text: '2100', x: 353 }, { text: '3900', x: 444 }, { text: '5400', x: 586 }];

function Plan() {
  return (
    <svg className="block h-full w-full bg-black" shapeRendering="crispEdges" fontFamily="'Noto Sans CJK SC', sans-serif" fontSize="18" aria-label="板受力筋平面图">
      <rect x="320" y="19" width="100%" height="670" fill="#656565" />
      <g fill="#2bdd2b">
        {axesX.map((a) => <rect key={a.x} x={a.x - a.beam} y="15" width={a.beam * 2 + (a.beam === 4 ? 1 : 0)} height="679" />)}
        {axesY.map((a) => <rect key={a.name} x="316" y={a.y - 4} width="100%" height="9" />)}
      </g>
      <g fill="#8b00ff">
        {axesX.map((c) => axesY.map((r) => <rect key={`${c.x}${r.name}`} x={c.x - c.off} y={r.y - r.off} width="12" height="12" />))}
      </g>

      <g stroke="#008000" fill="none">
        {axesY.map((a) => (
          <g key={a.name}>
            <circle cx="171" cy={a.y + 1} r="11.500" />
            <path d={`M183 ${a.y + 0.5}H320M270 ${a.y - 4}l8 8`} />
          </g>
        ))}
        {axesX.map(({ x }) => <path key={x} d={`M${x + 0.5} 694V2000M${x - 4} 739l9 -9`} />)}
        <path d="M228.500 19V689M274.500 19V689M224 15l8 8M224 684l9 9M320 734.500H4000" />
      </g>

      <g fill="none" stroke="#ffff30" strokeWidth="3">
        <path d="M545.500 21v53M505 52.500h163M351.500 378v127M350.500 507v90M322 553.500h62M354.500 598v62M322 643.500h62" />
      </g>
      <g fill="none" stroke="#fff">
        <path d="M503.500 20.500h165v55h-165zM321.500 376.500h64v284h-64zM321 506.500h64M321 596.500h64" />
      </g>
      <g stroke="#f00">
        {axesX.map(({ x }) => <path key={x} d={`M${x + 0.5} 19V689`} />)}
        {axesY.map((a) => <path key={a.name} d={`M320 ${a.y + 0.5}H4000`} />)}
      </g>

      <g fill="#fff" textAnchor="middle">
        {axesY.map((a) => <text key={a.name} x="171" y={a.y + 7}>{a.name}</text>)}
        {spansY.map((s) => <text key={s.y} transform={`translate(259 ${s.y}) rotate(-90)`}>{s.text}</text>)}
        <text transform="translate(213 354) rotate(-90)">21900</text>
        {spansX.map((s) => <text key={s.x} x={s.x} y="764">{s.text}</text>)}
      </g>
      <g fill="#00ff20">
        <path d="M50 763l5 9h-10z" />
        <text x="50" y="762" fontSize="16" textAnchor="middle">Y</text>
      </g>
    </svg>
  );
}

export default function App() {
  return (
    <div className="flex h-screen flex-col overflow-hidden bg-white font-['Noto_Sans','Noto_Sans_CJK_SC',sans-serif] text-[12px] leading-[18px] text-[#222]">
      <Header />
      <Ribbon />
      <OptionBar />
      <main className="relative flex min-h-0 flex-1">
        <Navigator />
        <div className="ml-1 flex w-[288px] shrink-0 flex-col gap-1">
          <ComponentPanel />
          <PropertyPanel />
        </div>
        <div className="flex w-1 shrink-0 flex-col pt-[372px]">
          <button aria-label="收起面板" className="flex h-[100px] items-center bg-[#5d6673]">
            <svg viewBox="0 0 4 6" className="h-[6px] w-1" aria-hidden="true"><path d="M4 0v6L0 3z" fill="#ccc" /></svg>
          </button>
        </div>
        <div className="min-w-0 flex-1 overflow-hidden bg-black">
          <Plan />
        </div>
        <svg viewBox="0 0 88 112" className="pointer-events-none absolute top-[550px] left-[369px] h-28 w-[88px]" aria-hidden="true">
          <path d="M0 0l17 7-3 3 74 102L7 15l-3 3z" fill="#fb3b3b" />
        </svg>
      </main>
    </div>
  );
}
